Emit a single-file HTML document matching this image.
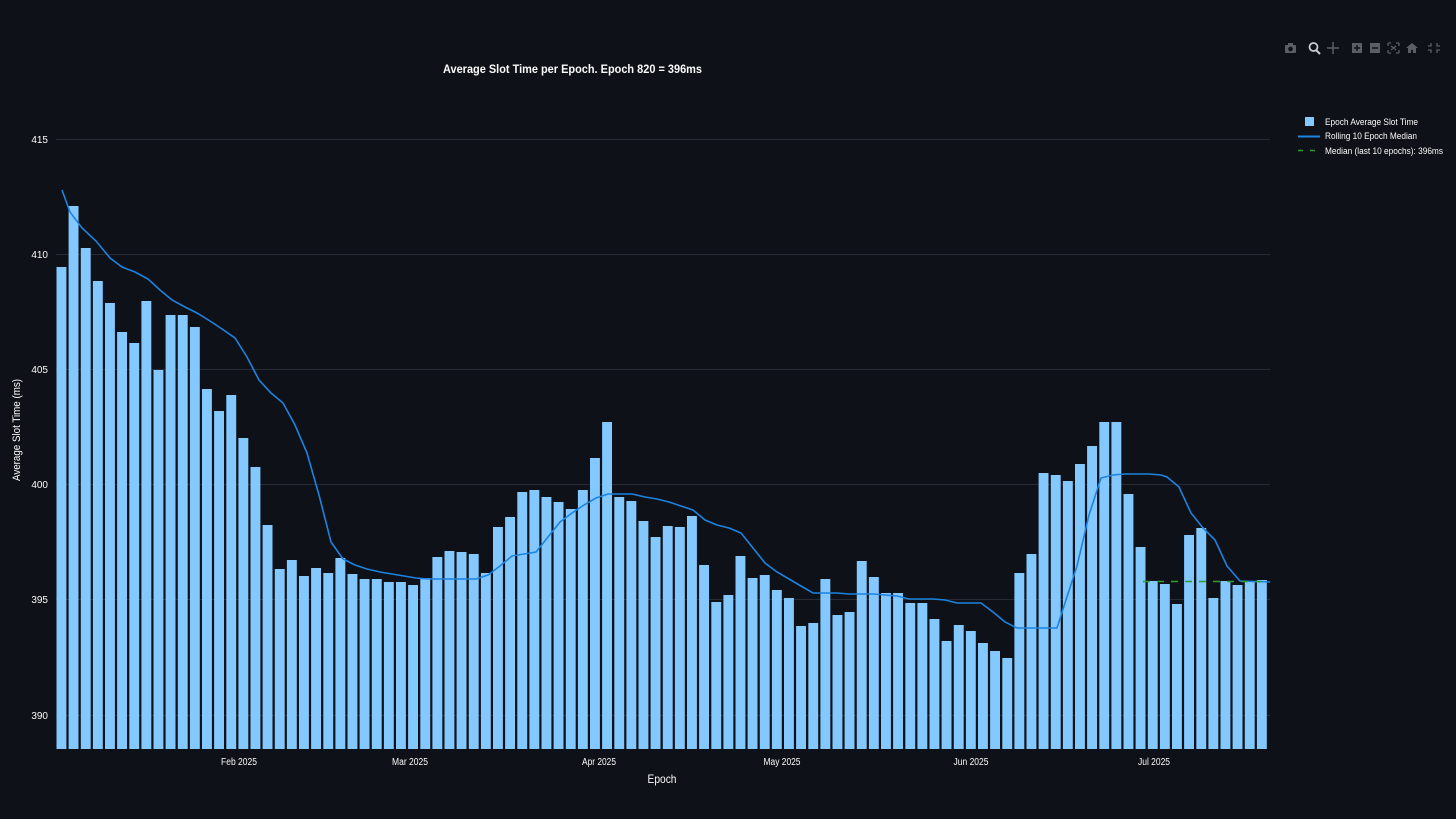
<!DOCTYPE html>
<html><head><meta charset="utf-8"><style>
html,body{margin:0;padding:0;background:#0e1117;width:1456px;height:819px;overflow:hidden}
svg{display:block;font-family:"Liberation Sans",sans-serif}
</style></head><body>
<svg id="s" width="1456" height="819" xmlns="http://www.w3.org/2000/svg">
<rect width="1456" height="819" fill="#0e1117"/>
<g stroke="#262c36" stroke-width="1">
<line x1="56" x2="1270" y1="139.5" y2="139.5"/>
<line x1="56" x2="1270" y1="254.5" y2="254.5"/>
<line x1="56" x2="1270" y1="369.5" y2="369.5"/>
<line x1="56" x2="1270" y1="484.5" y2="484.5"/>
<line x1="56" x2="1270" y1="599.5" y2="599.5"/>
<line x1="56" x2="1270" y1="715.5" y2="715.5"/>
</g>
<g id="bars" fill="#83c9ff"></g>
<polyline id="ln" fill="none" stroke="#1c83e1" stroke-width="1.6" points=""/>
<line x1="1143" x2="1269" y1="581.5" y2="581.5" stroke="#2ca02c" stroke-width="1.5" stroke-dasharray="7,7"/>
<g fill="#fafafa" font-size="10" text-anchor="end">
<text x="48" y="143">415</text><text x="48" y="258">410</text><text x="48" y="373">405</text>
<text x="48" y="488">400</text><text x="48" y="603">395</text><text x="48" y="719">390</text>
</g>
<g fill="#fafafa" font-size="10" text-anchor="middle">
<text x="239" y="765" textLength="36" lengthAdjust="spacingAndGlyphs">Feb 2025</text><text x="410" y="765" textLength="36" lengthAdjust="spacingAndGlyphs">Mar 2025</text><text x="599" y="765" textLength="34" lengthAdjust="spacingAndGlyphs">Apr 2025</text>
<text x="782" y="765" textLength="37" lengthAdjust="spacingAndGlyphs">May 2025</text><text x="971" y="765" textLength="35" lengthAdjust="spacingAndGlyphs">Jun 2025</text><text x="1154" y="765" textLength="32" lengthAdjust="spacingAndGlyphs">Jul 2025</text>
</g>
<text x="662" y="783" fill="#fafafa" font-size="12" text-anchor="middle" textLength="29" lengthAdjust="spacingAndGlyphs">Epoch</text>
<text transform="translate(20,430) rotate(-90)" fill="#fafafa" font-size="11" text-anchor="middle" textLength="102" lengthAdjust="spacingAndGlyphs">Average Slot Time (ms)</text>
<text x="443" y="73" fill="#fafafa" font-size="12" font-weight="bold" textLength="259" lengthAdjust="spacingAndGlyphs">Average Slot Time per Epoch. Epoch 820 = 396ms</text>
<rect x="1305" y="117" width="9" height="9" fill="#83c9ff"/>
<line x1="1298" x2="1320" y1="136.5" y2="136.5" stroke="#1c83e1" stroke-width="2"/>
<line x1="1298" x2="1320" y1="150.5" y2="150.5" stroke="#2ca02c" stroke-width="1.5" stroke-dasharray="5,7"/>
<g fill="#fafafa" font-size="9">
<text x="1325" y="125" textLength="93" lengthAdjust="spacingAndGlyphs">Epoch Average Slot Time</text>
<text x="1325" y="139" textLength="92" lengthAdjust="spacingAndGlyphs">Rolling 10 Epoch Median</text>
<text x="1325" y="154" textLength="118" lengthAdjust="spacingAndGlyphs">Median (last 10 epochs): 396ms</text>
</g>
<g fill="#5a5f66">
<rect x="1285" y="45" width="11" height="8" rx="1"/><circle cx="1290.5" cy="49" r="2.3" fill="#0e1117"/><rect x="1288" y="43" width="5" height="3"/>
<circle cx="1313.5" cy="47" r="4" fill="none" stroke="#c9ccd0" stroke-width="1.8"/><line x1="1316" y1="50" x2="1320" y2="54" stroke="#c9ccd0" stroke-width="2"/>
<path d="M1333 42v12M1327 48h12" stroke="#5a5f66" stroke-width="1.5"/>
<rect x="1352" y="43" width="10" height="10"/><path d="M1357 45v6M1354 48h6" stroke="#0e1117" stroke-width="1.5"/>
<rect x="1370" y="43" width="10" height="10"/><path d="M1372 48h6" stroke="#0e1117" stroke-width="1.5"/>
<path d="M1388 43h3M1388 43v3M1399 43h-3M1399 43v3M1388 53h3M1388 53v-3M1399 53h-3M1399 53v-3M1391 46l5 4M1396 46l-5 4" stroke="#5a5f66" stroke-width="1.3" fill="none"/>
<path d="M1406 48l6-5 6 5h-2v5h-3v-3h-2v3h-3v-5z"/>
<path d="M1431 43v3h-3M1437 43v3h3M1431 53v-3h-3M1437 53v-3h3" stroke="#5a5f66" stroke-width="1.3" fill="none"/>
</g>
</svg>
<script>
var tops=[267,206,248,281,303,332,343,301,370,315,315,327,389,411,395,438,467,525,569,560,576,568,573,558,574,579,579,582,582,585,578,557,551,552,554,573,527,517,492,490,497,502,509,490,458,422,497,501,521,537,526,527,516,565,602,595,556,578,575,590,598,626,623,579,615,612,561,577,593,593,603,603,619,641,625,631,643,651,658,573,554,473,475,481,464,446,422,422,494,547,581,584,604,535,528,598,581,585,581,580];
var g=document.getElementById('bars'),h='';var n=tops.length,step=(1269-56.5)/n;
for(var i=0;i<n;i++){var x=56.5+i*step;h+='<rect x="'+x.toFixed(1)+'" y="'+tops[i]+'" width="'+(step-2.2).toFixed(1)+'" height="'+(749-tops[i])+'"/>';}
g.innerHTML=h;
document.getElementById('ln').setAttribute('points',"62,190 70,212 82,228 96,241 110,258 122,267 135,272 148,279 160,290 172,300 185,307 197,313 210,321 222,329 235,338 247,357 259,380 271,393 283,403 295,425 307,453 319,495 331,542 343,559 355,565 367,569 380,572 392,574 404,576 416,578 428,579 440,579 452,579 464,579 476,579 488,575 500,566 512,556 524,554 536,552 548,537 560,522 572,513 584,505 596,498 608,494 620,494 632,494 645,497 657,499 669,502 681,506 693,510 705,520 717,525 729,528 741,533 753,548 765,563 777,572 789,579 801,586 813,593 825,593 837,593 849,594 861,594 873,594 885,595 897,596 909,599 921,599 933,599 945,600 957,603 969,603 981,603 993,612 1005,622 1017,628 1029,628 1041,628 1057,628 1065,603 1077,566 1089,515 1101,478 1113,475 1125,474 1137,474 1149,474 1161,475 1167,477 1179,487 1191,513 1203,528 1215,540 1227,566 1240,581 1270,582");
</script>
</body></html>
